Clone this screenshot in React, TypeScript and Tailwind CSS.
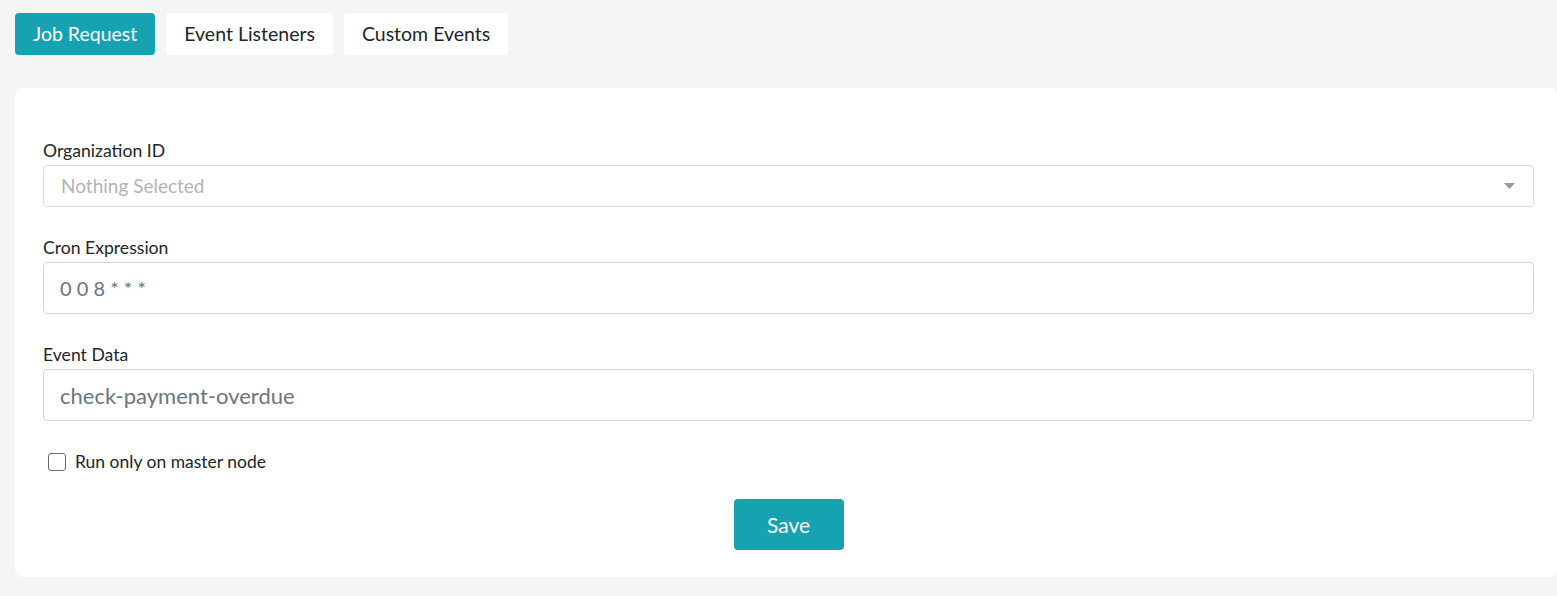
import { useState } from 'react';

const tabs = ['Job Request', 'Event Listeners', 'Custom Events'];

export default function App() {
  const [active, setActive] = useState('Job Request');
  const [masterOnly, setMasterOnly] = useState(false);

  return (
    <div className="min-h-screen overflow-hidden bg-[#f5f5f5] font-['Lato','Noto_Sans',sans-serif] text-[#212529]">
      <div className="flex gap-[11px] pl-[15px] pt-[13px]">
        {tabs.map((t) => (
          <button
            key={t}
            onClick={() => setActive(t)}
            className={
              t === active
                ? 'h-[42px] rounded-[4px] bg-[#17a2b2] px-[18px] text-[19.5px] text-white'
                : 'h-[42px] rounded-[4px] bg-white px-[18px] text-[19.5px] text-[#212529]'
            }
          >
            {t}
          </button>
        ))}
      </div>

      <div className="ml-[15px] mt-[33px] rounded-[8px] bg-white pb-[27px] pl-[28px] pr-[23px] pt-[51px]">
        <div className="flex flex-col">
          <label className="text-[17.6px] leading-[24px]">Organization ID</label>
          <div className="mt-[2px] flex h-[42px] items-center justify-between rounded-[4px] border border-[#dcdcdc] pl-[17px] pr-[17px]">
            <span className="text-[19px] text-[#b3b3b3]">Nothing Selected</span>
            <svg width="11" height="6" viewBox="0 0 11 6" className="mr-[1px]">
              <path d="M0 0 L11 0 L5.5 6 Z" fill="#9a9a9a" />
            </svg>
          </div>

          <label className="mt-[29px] text-[17.6px] leading-[24px]">Cron Expression</label>
          <input
            defaultValue="0 0 8 * * *"
            className="mt-[2px] h-[52px] rounded-[4px] border border-[#ced4da] px-[16px] text-[20px] text-[#6c757d] outline-none"
          />

          <label className="mt-[29px] text-[17.6px] leading-[24px]">Event Data</label>
          <input
            defaultValue="check-payment-overdue"
            className="mt-[2px] h-[52px] rounded-[4px] border border-[#ced4da] px-[16px] text-[22px] text-[#6c757d] outline-none"
          />

          <label className="mt-[29px] flex h-[24px] cursor-pointer items-center pl-[5px] text-[17.5px]">
            <input
              type="checkbox"
              checked={masterOnly}
              onChange={(e) => setMasterOnly(e.target.checked)}
              className="h-[18px] w-[18px] appearance-none rounded-[3px] border-[1.5px] border-[#6b6b6b] bg-white checked:bg-[#17a2b2]"
            />
            <span className="ml-[9px]">Run only on master node</span>
          </label>

          <div className="mt-[25px] flex justify-center">
            <button className="h-[51px] w-[110px] rounded-[4px] bg-[#17a2b2] text-[21px] text-white">Save</button>
          </div>
        </div>
      </div>
    </div>
  );
}
